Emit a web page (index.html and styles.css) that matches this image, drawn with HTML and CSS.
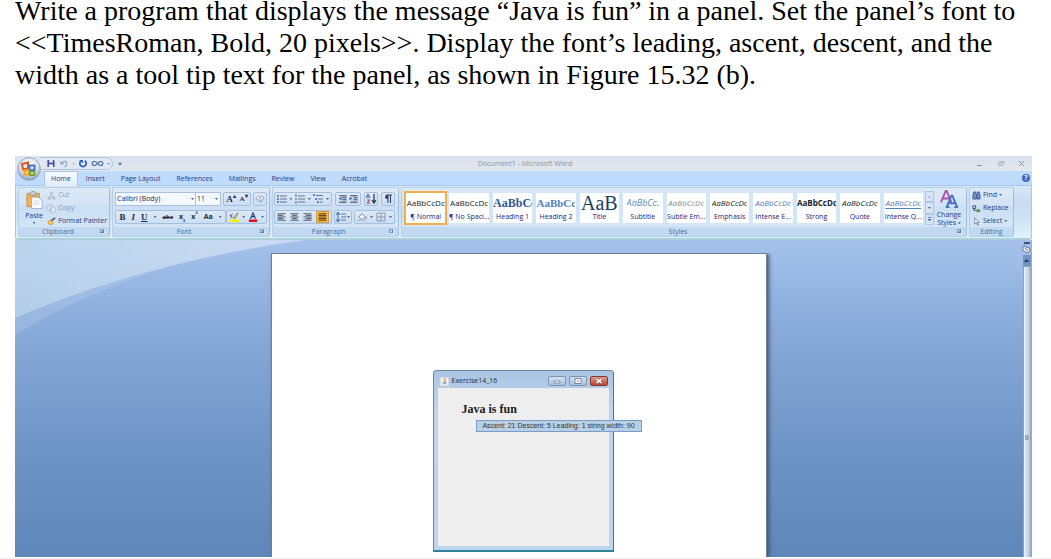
FILE: index.html
```html
<!DOCTYPE html>
<html lang="en">
<head>
    <meta charset="UTF-8">
    <meta name="viewport" content="width=device-width, initial-scale=1.0">
    <title>Exercise 14.16</title>
    <link rel="stylesheet" href="styles.css">
</head>
<body>

    <p class="question">Write a program that displays the message “Java is fun” in a panel. Set the panel’s font to &lt;&lt;TimesRoman, Bold, 20 pixels&gt;&gt;. Display the font’s leading, ascent, descent, and the width as a tool tip text for the panel, as shown in Figure 15.32 (b).</p>

    <div class="word">
        <button class="office" aria-label="Office">
            <svg viewBox="0 0 24 24">
                <defs>
                    <radialGradient id="orb" cx=".5" cy=".3" r=".7">
                        <stop offset="0" stop-color="#fff"/>
                        <stop offset=".6" stop-color="#d9dfe8"/>
                        <stop offset="1" stop-color="#8f9fb5"/>
                    </radialGradient>
                </defs>
                <circle cx="12" cy="12" r="11.3" fill="url(#orb)" stroke="#8a9bb5" stroke-width=".8"/>
                <g fill="none" stroke-width="2">
                    <path d="M5 7l6-1.500v6l-5 .8z" stroke="#e0561c"/>
                    <path d="M12.500 8.500h5v4.500h-5z" stroke="#3f78c4"/>
                    <path d="M7.500 13.500h4v4h-4z" stroke="#f0a51e"/>
                    <path d="M13 14.500h4.500v3.500H13z" stroke="#76a83a"/>
                </g>
            </svg>
        </button>

        <!-- title bar -->
        <div class="titlebar">
            <div class="quick">
                <button aria-label="Save"><svg viewBox="0 0 10 10"><path d="M1 1h7l1 1v7H1z" fill="#4350a8"/><path d="M3 1h4v3H3z" fill="#dfe6f7"/><path d="M3 6h4v3H3z" fill="#fff"/></svg></button>
                <button aria-label="Undo"><svg viewBox="0 0 10 10"><path d="M3 5c1-3 5-3 5 0 0 2-1 3-2 4" fill="none" stroke="#93a5c4" stroke-width="1.400"/><path d="M1 2v4h4z" fill="#93a5c4"/></svg></button>
                <i class="arrow pale"></i>
                <button aria-label="Repeat"><svg viewBox="0 0 10 10"><path d="M3 2a3.500 3.500 0 1 0 4 0" fill="none" stroke="#2c62c0" stroke-width="2"/><path d="M1 1h4v4z" fill="#2c62c0"/></svg></button>
                <button class="wide" aria-label="Symbol"><svg viewBox="0 0 14 10"><path d="M7 5C5 2 1 2 1 5s4 3 6 0 6-3 6 0-4 3-6 0z" fill="none" stroke="#44689c" stroke-width="1.200"/></svg></button>
                <i class="arrow"></i>
            </div>
            <i class="arrow more"></i>
            <span class="doc-name">Document1 - Microsoft Word</span>
            <div class="win-buttons">
                <button aria-label="Minimize"><svg viewBox="0 0 8 8"><path d="M1 5.500h5" stroke="#8b93a0"/></svg></button>
                <button aria-label="Restore"><svg viewBox="0 0 8 8"><path d="M1.500 3h4v2.500h-4zM2 1.500h5V4" fill="none" stroke="#a0a7b3" stroke-width=".8"/></svg></button>
                <button aria-label="Close"><svg viewBox="0 0 8 8"><path d="M1 1l5 5M6 1L1 6" stroke="#8b93a0"/></svg></button>
            </div>
        </div>

        <!-- tabs -->
        <div class="tabs">
            <button class="tab current">Home</button>
            <button class="tab">Insert</button>
            <button class="tab">Page Layout</button>
            <button class="tab">References</button>
            <button class="tab">Mailings</button>
            <button class="tab">Review</button>
            <button class="tab">View</button>
            <button class="tab">Acrobat</button>
            <button class="help" aria-label="Help">?</button>
        </div>

        <!-- ribbon -->
        <div class="ribbon">
            <div class="group clipboard">
                <div class="tools">
                    <button class="big">
                        <svg viewBox="0 0 18 20"><path d="M1 3h13v14H1z" fill="#efb458" stroke="#c88d35"/><path d="M4 3c0-1 2-1 2-2h3c0 1 2 1 2 2v2H4z" fill="#c9cdd6" stroke="#80889a" stroke-width=".7"/><path d="M6 7h7l4 3v9H6z" fill="#fff" stroke="#8fa3c4" stroke-width=".8"/><path d="M8 11h6M8 13h6M8 15h6" stroke="#cbd7ea"/></svg>
                        <span>Paste</span>
                        <i class="arrow"></i>
                    </button>
                    <div class="stack">
                        <button class="off"><svg viewBox="0 0 10 10"><path d="M3 1l4 6M7 1L3 7" stroke="#9aa8bb"/><circle cx="2.500" cy="8" r="1.300" fill="none" stroke="#9aa8bb"/><circle cx="7.500" cy="8" r="1.300" fill="none" stroke="#9aa8bb"/></svg>Cut</button>
                        <button class="off"><svg viewBox="0 0 10 10"><path d="M1 1h4v6H1zM4 3h4l1 1v5H4z" fill="#e9eff8" stroke="#a5b2c5" stroke-width=".8"/></svg>Copy</button>
                        <button><svg viewBox="0 0 10 10"><path d="M1 5l3-2 3 3-2 3-3-1z" fill="#f5c24a" stroke="#b98a25" stroke-width=".6"/><path d="M5 4l4-3" stroke="#345a9c" stroke-width="2"/></svg>Format Painter</button>
                    </div>
                </div>
                <div class="caption"><span>Clipboard</span><i class="launch"></i></div>
            </div>

            <div class="group font">
                <div class="tools rows">
                    <div class="row">
                        <span class="combo family"><select aria-label="Font"><option>Calibri (Body)</option></select><i class="arrow"></i></span>
                        <span class="combo size"><select aria-label="Font size"><option>11</option></select><i class="arrow"></i></span>
                        <div class="box grow-shrink">
                            <button class="serif" aria-label="Grow font">A<sup>▴</sup></button>
                            <button class="serif small" aria-label="Shrink font">A<sup>▾</sup></button>
                        </div>
                        <div class="box">
                            <button aria-label="Clear formatting"><svg viewBox="0 0 12 10"><path d="M1 5l3-4 2 2 2-2 3 3-4 5z" fill="#fff" stroke="#6f86ab" stroke-width=".9"/><path d="M4 5l3-2 2 2-2 3z" fill="#d8dff0" stroke="#7d8fb0" stroke-width=".7"/></svg></button>
                        </div>
                    </div>
                    <div class="row">
                        <div class="box letters">
                            <button class="serif"><b>B</b></button>
                            <button class="serif"><i>I</i></button>
                            <button class="serif"><u>U</u></button>
                            <i class="arrow"></i>
                            <button class="serif tiny"><s>abe</s></button>
                            <button>x<sub>₂</sub></button>
                            <button>x<sup>²</sup></button>
                            <button>Aa</button>
                            <i class="arrow"></i>
                        </div>
                        <div class="box colours">
                            <button aria-label="Highlight"><svg viewBox="0 0 12 12"><path d="M0 9h12v3H0z" fill="#f8f000"/><path d="M5 7l5-6 1 1-4 6z" fill="#e8c95a" stroke="#55617a" stroke-width=".7"/><path d="M1 3l3 4M4 2L2 7" stroke="#3c4b68" stroke-width=".9"/></svg></button>
                            <i class="arrow"></i>
                            <button aria-label="Font color"><svg viewBox="0 0 12 12"><path d="M1 9h10v3H1z" fill="#e2101c"/><path d="M3 8l3-7 3 7M4 5.500h4" fill="none" stroke="#27437e" stroke-width="1.400"/></svg></button>
                            <i class="arrow"></i>
                        </div>
                    </div>
                </div>
                <div class="caption"><span>Font</span><i class="launch"></i></div>
            </div>

            <div class="group paragraph">
                <div class="tools rows">
                    <div class="row">
                        <div class="box lists">
                            <button aria-label="Bullets"><svg viewBox="0 0 10 10"><path d="M0 2h2M0 5h2M0 8h2" stroke="#3567b4" stroke-width="1.500"/><path d="M3 2h7M3 5h7M3 8h7" stroke="#66758f"/></svg></button>
                            <i class="arrow"></i>
                            <button aria-label="Numbering"><svg viewBox="0 0 10 10"><path d="M1 0v3M1 4v2M1 7v3" stroke="#3567b4"/><path d="M3 2h7M3 5h7M3 8h7" stroke="#66758f"/></svg></button>
                            <i class="arrow"></i>
                            <button aria-label="Multilevel list"><svg viewBox="0 0 10 10"><path d="M0 1h2M2 5h2M4 8h2" stroke="#3567b4" stroke-width="1.500"/><path d="M3 1.500h7M5 5h5M7 8h3" stroke="#66758f"/></svg></button>
                            <i class="arrow"></i>
                        </div>
                        <div class="box indents">
                            <button aria-label="Decrease indent"><svg viewBox="0 0 10 10"><path d="M1 1h9M5 3.500h5M5 6h5M1 9h9" stroke="#27324a" stroke-width="1.200"/><path d="M4 2.500v4L0 4.500z" fill="#3567b4"/></svg></button>
                            <button aria-label="Increase indent"><svg viewBox="0 0 10 10"><path d="M1 1h9M5 3.500h5M5 6h5M1 9h9" stroke="#27324a" stroke-width="1.200"/><path d="M0 2.500v4l4-2z" fill="#3567b4"/></svg></button>
                        </div>
                        <div class="box">
                            <button aria-label="Sort"><svg viewBox="0 0 10 10"><path d="M0 4l2-4 2 4M1 3h2" fill="none" stroke="#3567b4"/><path d="M1 6h3L1 9h3" fill="none" stroke="#b03a4a"/><path d="M8 0v8M6 6l2 3 2-3" fill="none" stroke="#27324a" stroke-width="1.200"/></svg></button>
                        </div>
                        <div class="box">
                            <button aria-label="Show marks"><svg viewBox="0 0 10 10"><path d="M5 1v8M7.500 1v8M3 1h6" stroke="#2f4064" stroke-width="1.100" fill="none"/><path d="M5 1H4a2 2 0 0 0 0 4h1z" fill="#2f4064"/></svg></button>
                        </div>
                    </div>
                    <div class="row">
                        <div class="box aligns">
                            <button aria-label="Align left"><svg viewBox="0 0 10 10"><path d="M0 1h10M0 3h7M0 5h10M0 7h7M0 9h10" stroke="#3a4358" stroke-width="1.100"/></svg></button>
                            <button aria-label="Center"><svg viewBox="0 0 10 10"><path d="M0 1h10M2 3h6M0 5h10M2 7h6M0 9h10" stroke="#3a4358" stroke-width="1.100"/></svg></button>
                            <button aria-label="Align right"><svg viewBox="0 0 10 10"><path d="M0 1h10M3 3h7M0 5h10M3 7h7M0 9h10" stroke="#3a4358" stroke-width="1.100"/></svg></button>
                            <button class="on" aria-label="Justify"><svg viewBox="0 0 10 10"><path d="M0 1h10M0 3h10M0 5h10M0 7h10M0 9h10" stroke="#6b4a12" stroke-width="1.400"/></svg></button>
                        </div>
                        <div class="box">
                            <button aria-label="Line spacing"><svg viewBox="0 0 10 10"><path d="M2 1v8M0 3l2-3 2 3M0 7l2 3 2-3" fill="none" stroke="#3567b4"/><path d="M5 2h5M5 5h5M5 8h5" stroke="#66758f"/></svg></button>
                            <i class="arrow"></i>
                        </div>
                        <div class="box shade">
                            <button aria-label="Shading"><svg viewBox="0 0 12 10"><path d="M2 5l4-4 4 4-4 3z" fill="#fff" stroke="#64748f"/><path d="M10 4c2 1 2 3 1 4z" fill="#64748f"/><path d="M0 9h11" stroke="#b5c0d2" stroke-width="2"/></svg></button>
                            <i class="arrow"></i>
                            <button aria-label="Borders"><svg viewBox="0 0 10 10"><path d="M1 1h8v8H1zM5 1v8M1 5h8" fill="none" stroke="#8b9ab3"/></svg></button>
                            <i class="arrow"></i>
                        </div>
                    </div>
                </div>
                <div class="caption"><span>Paragraph</span><i class="launch"></i></div>
            </div>

            <div class="group styles">
                <div class="tools">
                    <div class="gallery">
                        <button class="style picked"><span class="sample">AaBbCcDc</span><span class="name">¶ Normal</span></button>
                        <button class="style"><span class="sample">AaBbCcDc</span><span class="name">¶ No Spaci...</span></button>
                        <button class="style"><span class="sample heading one">AaBbCc</span><span class="name">Heading 1</span></button>
                        <button class="style"><span class="sample heading">AaBbCc</span><span class="name">Heading 2</span></button>
                        <button class="style"><span class="sample title">AaB</span><span class="name">Title</span></button>
                        <button class="style"><span class="sample subtitle">AaBbCc.</span><span class="name">Subtitle</span></button>
                        <button class="style"><span class="sample italic grey">AaBbCcDc</span><span class="name">Subtle Em...</span></button>
                        <button class="style"><span class="sample italic">AaBbCcDc</span><span class="name">Emphasis</span></button>
                        <button class="style"><span class="sample italic blue">AaBbCcDc</span><span class="name">Intense E...</span></button>
                        <button class="style"><span class="sample strong">AaBbCcDc</span><span class="name">Strong</span></button>
                        <button class="style"><span class="sample italic">AaBbCcDc</span><span class="name">Quote</span></button>
                        <button class="style"><span class="sample italic blue lined">AaBbCcDc</span><span class="name">Intense Q...</span></button>
                    </div>
                    <div class="gallery-scroll">
                        <button aria-label="Up"><i class="arrow up pale"></i></button>
                        <button aria-label="Down"><i class="arrow"></i></button>
                        <button aria-label="More"><i class="arrow more"></i></button>
                    </div>
                    <button class="big change">
                        <svg viewBox="0 0 20 20"><path d="M1 13L6 1h1l5 12M3 9h7" fill="none" stroke="#b04fb0" stroke-width="2"/><path d="M7 18l5-12h1l5 12M9 14h7M6 18h4M15 18h4" fill="none" stroke="#3f74bd" stroke-width="2"/></svg>
                        <span>Change<br>Styles <i class="arrow"></i></span>
                    </button>
                </div>
                <div class="caption"><span>Styles</span><i class="launch"></i></div>
            </div>

            <div class="group editing">
                <div class="tools">
                    <div class="stack">
                        <button><svg viewBox="0 0 10 10"><path d="M2 1h2l1 3V9H1V5zM6 1h2l1 4v4H6V4z" fill="#6f8fc8" stroke="#2f4b86" stroke-width=".8"/></svg>Find <i class="arrow"></i></button>
                        <button><svg viewBox="0 0 10 10"><path d="M1 2h3v3H1zM2 5v2h3" fill="none" stroke="#38455f"/><path d="M5 6h4v3H5z" fill="#4f9455"/></svg>Replace</button>
                        <button><svg viewBox="0 0 10 10"><path d="M3 1v7l2-2 1 3h1L6 6h2z" fill="#fff" stroke="#5b6b88" stroke-width=".8"/></svg>Select <i class="arrow"></i></button>
                    </div>
                </div>
                <div class="caption"><span>Editing</span></div>
            </div>
        </div>

        <!-- document -->
        <div class="workspace">
            <svg class="swoosh" viewBox="0 0 300 100" preserveAspectRatio="none">
                <defs>
                    <linearGradient id="sheen" x1="0" y1="0" x2="1" y2="0">
                        <stop offset="0" stop-color="#cfe6f2" stop-opacity=".45"/>
                        <stop offset="1" stop-color="#d6def6" stop-opacity=".8"/>
                    </linearGradient>
                </defs>
                <path d="M0 0h290Q120 20 0 95z" fill="#c8dcf0" opacity=".22"/>
                <path d="M0 0h290Q130 22 0 78z" fill="url(#sheen)"/>
            </svg>
            <div class="canvas">
                <div class="page">
                    <div class="frame">
                        <div class="frame-title">
                            <svg viewBox="0 0 10 10"><path d="M0 0h10v10H0z" fill="#f4f4f4" stroke="#b8c0cc"/><path d="M5 1c2 2-2 2 0 4M6.500 2c-1 1-1 2 0 3" fill="none" stroke="#e07a30" stroke-width=".9"/><path d="M3 6h4M3 7.500h4" stroke="#5b84ae" stroke-width=".9"/></svg>
                            <span>Exercise14_16</span>
                            <button aria-label="Minimize"><svg viewBox="0 0 10 8"><path d="M2 4h6v2H2z" fill="#fff" stroke="#5d6f8a" stroke-width=".7"/></svg></button>
                            <button aria-label="Maximize"><svg viewBox="0 0 10 8"><path d="M2 1.500h6v5H2z" fill="#fff" stroke="#5d6f8a" stroke-width=".8"/><path d="M4 3.500h2v1H4z" fill="#5d6f8a"/></svg></button>
                            <button class="shut" aria-label="Close"><svg viewBox="0 0 10 8"><path d="M2.500 2l5 4M7.500 2l-5 4" stroke="#6b2a24" stroke-width="2.800"/><path d="M2.500 2l5 4M7.500 2l-5 4" stroke="#fff" stroke-width="1.800"/></svg></button>
                        </div>
                        <div class="panel">
                            <span class="message">Java is fun</span>
                            <div class="tooltip" role="tooltip">Ascent: 21 Descent: 5 Leading: 1 string width: 90</div>
                        </div>
                    </div>
                </div>
            </div>
            <div class="scrollbar">
                <i class="split"></i>
                <button class="ruler" aria-label="Ruler"><svg viewBox="0 0 10 10"><path d="M1 2l3-1 1 2 3 0 1 4-3 2-3-2-2-1z" fill="#eef1f6" stroke="#5c6b84"/><path d="M3 3l4 4" stroke="#5c6b84"/></svg></button>
                <button class="step" aria-label="Scroll up"><i class="arrow up"></i></button>
                <div class="thumb"><i></i></div>
            </div>
        </div>
    </div>

</body>
</html>
```
FILE: styles.css
```css
* {
    box-sizing: border-box;
}

body {
    margin: 0;
    min-height: 100vh;
    display: flex;
    flex-direction: column;
    background-color: #fff;
    border-bottom: 1px solid #f3f3f3;
}

button {
    margin: 0;
    padding: 0;
    border: 0;
    background: none;
    color: inherit;
    font: inherit;
}

svg {
    display: block;
    flex: none;
}

.question {
    margin: -5px 8px 65px 15px;
    color: #000;
    font-family: "Liberation Serif", serif;
    font-size: 28px;
    line-height: 32px;
}

/* Word window */
.word {
    position: relative;
    flex: 1;
    display: flex;
    flex-direction: column;
    margin: 0 19px 1px 15px;
    color: #1f3a7c;
    font-family: "Open Sans", "Noto Sans", sans-serif;
    font-size: 7px;
    font-weight: 500;
    line-height: 8px;
}

.office {
    position: absolute;
    left: 2px;
    top: 1px;
    z-index: 1;
}

.office svg {
    width: 24px;
    height: 24px;
}

.arrow {
    display: inline-block;
    flex: none;
    width: 3px;
    height: 2px;
    background-color: #4a6697;
    clip-path: polygon(0 0, 100% 0, 50% 100%);
    vertical-align: middle;
}

.arrow.up {
    clip-path: polygon(50% 0, 100% 100%, 0 100%);
}

.arrow.pale {
    background-color: #9aa9c2;
}

.arrow.more {
    width: 4px;
    height: 4px;
    clip-path: polygon(0 0, 100% 0, 100% 20%, 0 20%, 0 45%, 100% 45%, 50% 100%, 0 45%);
}

/* Title bar */
.titlebar {
    display: flex;
    align-items: center;
    height: 15px;
    padding-left: 25px;
    background: linear-gradient(#d9e2ec, #dde4ec 50%, #e3e8ef);
}

.quick {
    display: flex;
    align-items: center;
    gap: 3px;
    width: 73px;
    height: 13px;
    padding-left: 6px;
    border: 1px solid #b4c4da;
    border-left: 0;
    border-radius: 0 7px 7px 0;
    background-color: #dfe8f3;
}

.quick svg {
    width: 10px;
    height: 9px;
}

.quick .wide svg {
    width: 13px;
}

.titlebar > .more {
    margin-left: 5px;
}

.doc-name {
    flex: 1;
    padding-right: 48px;
    text-align: center;
    color: #8d939d;
}

.win-buttons {
    display: flex;
    gap: 13px;
    padding-right: 6px;
}

.win-buttons svg {
    width: 8px;
    height: 8px;
}

/* Tabs */
.tabs {
    display: flex;
    height: 15px;
    padding: 0 2px 0 29px;
    background-color: #bfdbff;
    border-bottom: 1px solid #a5c5ec;
}

.tab {
    padding: 1px 8px 0;
}

.tab.current {
    height: 15px;
    border: 1px solid #a9c4e6;
    border-bottom: 0;
    border-radius: 2px 2px 0 0;
    padding: 0 6px;
    background: linear-gradient(#f5faff, #e2edf9);
}

.help {
    align-self: center;
    width: 8px;
    height: 8px;
    margin-left: auto;
    border-radius: 4px;
    background-color: #3b6ac0;
    color: #fff;
    font-weight: bold;
}

/* Ribbon */
.ribbon {
    display: flex;
    gap: 2px;
    height: 54px;
    padding: 1px 17px 1px 2px;
    background: linear-gradient(#dae8f6, #c9dcf1 30%, #cfe1f4 60%, #def3fb);
    border: 1px solid #a5c8e4;
    border-bottom: 2px solid #abd0dc;
    border-top: 0;
    border-radius: 0 0 2px 2px;
}

.group {
    display: flex;
    flex-direction: column;
    border: 1px solid #b4cfe9;
    border-right-color: #9fbfdf;
    border-radius: 2px;
    background: linear-gradient(#dce9f7, #d3e3f5 35%, #cbdef3 40%, #d8e8f8);
}

.clipboard {
    width: 92px;
}

.font {
    width: 158px;
}

.paragraph {
    width: 127px;
}

.styles {
    flex: 1;
    min-width: 0;
}

.editing {
    width: 45px;
}

.tools {
    flex: 1;
    display: flex;
    min-height: 0;
    padding: 0 2px;
}

.caption {
    flex: none;
    display: flex;
    align-items: center;
    justify-content: center;
    position: relative;
    height: 9px;
    background-color: #c1d9f1;
    color: #4a6ea9;
}

.font .caption,
.paragraph .caption {
    padding-right: 14px;
}

.clipboard .caption {
    padding-right: 12px;
}

.styles .caption {
    padding-right: 12px;
}

.launch {
    position: absolute;
    right: 4px;
    width: 5px;
    height: 5px;
    border: 1px solid #7f9cc6;
    border-right-color: #dce9f7;
    border-bottom-color: #dce9f7;
    background: linear-gradient(135deg, transparent 50%, #5c7fb5 50%);
}

.big {
    display: flex;
    flex-direction: column;
    align-items: center;
    width: 28px;
    padding-top: 2px;
}

.big svg {
    width: 17px;
    height: 20px;
    margin-bottom: 2px;
}

.big > .arrow {
    margin-top: 2px;
}

.stack {
    display: flex;
    flex-direction: column;
    justify-content: space-between;
    align-items: flex-start;
    padding-top: 1px;
}

.stack button {
    display: flex;
    align-items: center;
    gap: 2px;
    height: 12px;
    white-space: nowrap;
}

.stack svg {
    width: 9px;
    height: 9px;
}

.stack .off {
    color: #8d9bb3;
}

.rows {
    flex-direction: column;
    justify-content: center;
    gap: 4px;
    padding-top: 1px;
}

.row {
    display: flex;
    justify-content: space-between;
    height: 14px;
}

.box {
    display: flex;
    align-items: center;
    justify-content: space-around;
    gap: 1px;
    padding: 0 1px;
    border: 1px solid #a6bfdf;
    border-radius: 2px;
    background: linear-gradient(#dde9f7, #ccdef3);
}

.box svg {
    width: 10px;
    height: 10px;
}

.paragraph .tools {
    padding: 1px 3px 0 1px;
}

.combo {
    display: flex;
    align-items: center;
    position: relative;
    border: 1px solid #a9c1de;
    background-color: #f3f8fd;
}

.combo select {
    appearance: none;
    width: 100%;
    height: 12px;
    margin: 0;
    padding: 0 1px;
    border: 0;
    background: none;
    color: #1c2c4c;
    font: inherit;
}

.combo .arrow {
    position: absolute;
    right: 2px;
}

.family {
    width: 82px;
}

.size {
    width: 26px;
    margin-left: -4px;
}

.grow-shrink {
    width: 28px;
}

.letters {
    width: 112px;
    color: #1c2c4c;
    font-weight: bold;
}

.colours {
    width: 41px;
}

.lists,
.aligns {
    width: 58px;
}

.shade {
    width: 41px;
}

.aligns svg,
.indents svg {
    width: 9px;
    height: 8px;
}

.indents {
    width: 26px;
}

.serif {
    color: #1c2c4c;
    font-family: "Liberation Serif", serif;
    font-size: 9px;
    font-weight: bold;
}

.serif.small,
.serif.tiny {
    font-size: 7px;
}

.box sup,
.box sub {
    font-size: 6px;
    line-height: 0;
}

.aligns .on {
    padding: 1px;
    border: 1px solid #d39a3c;
    background-color: #fbbe55;
}

/* Style gallery */
.gallery {
    flex: 1;
    display: grid;
    grid-template-columns: repeat(12, minmax(0, 1fr));
    margin: 3px 0 2px;
    background-color: #d3e5f8;
}

.style {
    display: flex;
    flex-direction: column;
    align-items: center;
    overflow: hidden;
    margin: 2px;
    background-color: #fff;
    color: #1e2478;
    white-space: nowrap;
}

.style.picked {
    margin: 0;
    border: 2px solid #f0b04c;
}

.sample {
    display: flex;
    align-items: center;
    max-width: 39px;
    height: 20px;
    overflow: hidden;
    color: #222;
    font-size: 8px;
}

.heading {
    color: #4f81bd;
    font-family: "Liberation Serif", serif;
    font-size: 11px;
    font-weight: bold;
}

.heading.one {
    color: #2c5a94;
    font-size: 12px;
}

.title {
    color: #1c3d63;
    font-family: "Liberation Serif", serif;
    font-size: 20px;
}

.subtitle {
    color: #5a8ac4;
    font-size: 9px;
    font-style: italic;
}

.italic {
    font-style: italic;
}

.grey {
    color: #8c8c8c;
}

.blue {
    color: #4f81bd;
}

.strong {
    font-weight: bold;
}

.lined {
    text-decoration: underline;
    text-underline-offset: 2px;
}

.gallery-scroll {
    display: flex;
    flex-direction: column;
    width: 9px;
    margin: 3px 0 2px;
}

.gallery-scroll button {
    flex: 1;
    display: flex;
    align-items: center;
    justify-content: center;
    border: 1px solid #b0c8e5;
    background-color: #d6e5f6;
}

.change {
    width: 30px;
}

.change svg {
    width: 19px;
    height: 19px;
}

/* Work area */
.workspace {
    flex: 1;
    display: flex;
    position: relative;
    background: linear-gradient(#a4c2eb, #87a9d8 30%, #6f95c6 65%, #5f86b8);
}

.swoosh {
    position: absolute;
    left: 0;
    top: 0;
    width: 300px;
    height: 100px;
}

.canvas {
    flex: 1;
    display: flex;
    justify-content: center;
    position: relative;
    padding-top: 13px;
}

.page {
    width: 496px;
    padding: 116px 0 5px 161px;
    border: 1px solid #6f7f96;
    border-bottom: 0;
    background-color: #fff;
    box-shadow: 2px 1px 4px #3d5577;
    clip-path: inset(0 -8px 0 -2px);
}

/* Java frame */
.frame {
    width: 181px;
    padding: 0 4px 4px;
    border: 1px solid #6f8799;
    border-right-color: #2a8396;
    border-bottom: 2px solid #2f8296;
    border-radius: 4px 4px 0 0;
    background: linear-gradient(#a9c5e4, #bed3ec 20%, #bdd3ee);
}

.frame-title {
    display: flex;
    align-items: center;
    gap: 3px;
    height: 17px;
    padding: 3px 1px 0 2px;
    color: #1b2a3c;
}

.frame-title > svg {
    width: 9px;
    height: 9px;
}

.frame-title span {
    flex: 1;
}

.frame-title button {
    display: flex;
    align-items: center;
    justify-content: center;
    width: 18px;
    height: 10px;
    border: 1px solid #7c93b2;
    border-radius: 2px;
    background: linear-gradient(#d2e1f2, #a9c2df);
}

.frame-title button svg {
    width: 10px;
    height: 8px;
}

.frame-title .shut {
    border-color: #7c3a38;
    background: linear-gradient(#e09a8c, #c2432f);
}

.panel {
    position: relative;
    min-height: 158px;
    padding: 14px 0 0 24px;
    background-color: #eee;
}

.message {
    display: block;
    color: #1a1a1a;
    font-family: "Liberation Serif", serif;
    font-size: 12px;
    font-weight: bold;
    line-height: 14px;
}

.tooltip {
    position: absolute;
    left: 38px;
    top: 32px;
    min-width: 166px;
    padding: 1px 2px;
    border: 1px solid #7a9cc9;
    background-color: #b8cfe5;
    color: #333;
    font-family: "Liberation Sans", sans-serif;
    font-size: 7px;
    text-align: center;
    white-space: nowrap;
}

/* Scroll bar */
.scrollbar {
    display: flex;
    flex-direction: column;
    align-items: center;
    width: 10px;
    padding-top: 2px;
    border-right: 1px solid #8fb0dc;
}

.split {
    width: 6px;
    height: 2px;
    background-color: #3f5478;
}

.ruler svg {
    width: 9px;
    height: 9px;
    margin: 1px 0;
}

.step {
    display: flex;
    align-items: center;
    justify-content: center;
    width: 8px;
    height: 11px;
    background-color: #6f94c2;
}

.step .arrow {
    width: 6px;
    height: 3px;
    background-color: #2d4468;
}

.thumb {
    flex: 1;
    display: flex;
    align-items: center;
    justify-content: center;
    width: 8px;
    border: 1px solid #8ba4c6;
    border-bottom: 0;
    background: linear-gradient(90deg, #eef3f8, #d3dfeb 40%, #b3c8e0);
}

.thumb i {
    width: 4px;
    height: 5px;
    margin-top: 50px;
    background-color: #a4a9b5;
}
```
